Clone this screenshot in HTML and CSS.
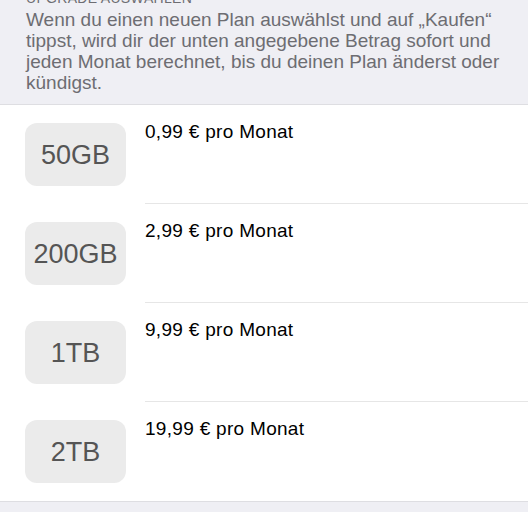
FILE: index.html
```html
<!DOCTYPE html>
<html lang="de">
<head>
    <meta charset="UTF-8">
    <meta name="viewport" content="width=device-width, initial-scale=1.0">
    <title>Upgrade auswählen</title>
    <link rel="stylesheet" href="styles.css">
</head>
<body>
    <div class="section-header">
        <h3>Upgrade auswählen</h3>
        <p>Wenn du einen neuen Plan auswählst und auf „Kaufen“ tippst, wird dir der unten angegebene Betrag sofort und jeden Monat berechnet, bis du deinen Plan änderst oder kündigst.</p>
    </div>

    <ul class="plan-list">
        <li class="plan">
            <div class="plan-badge">50GB</div>
            <div class="plan-info">0,99 € pro Monat</div>
        </li>
        <li class="plan">
            <div class="plan-badge">200GB</div>
            <div class="plan-info">2,99 € pro Monat</div>
        </li>
        <li class="plan">
            <div class="plan-badge">1TB</div>
            <div class="plan-info">9,99 € pro Monat</div>
        </li>
        <li class="plan">
            <div class="plan-badge">2TB</div>
            <div class="plan-info">19,99 € pro Monat</div>
        </li>
    </ul>
</body>
</html>
```

FILE: styles.css
```css
* {
    margin: 0;
    padding: 0;
    box-sizing: border-box;
}
body {
    background: #efeff4;
    font-family: 'Liberation Sans', Arial, sans-serif;
    overflow: hidden;
}
.section-header {
    padding: 0 20px 11px 26px;
    color: #6d6d72;
}
.section-header h3 {
    margin-top: -10px;
    font-size: 14px;
    font-weight: normal;
    line-height: 17px;
    text-transform: uppercase;
    letter-spacing: 0.3px;
}
.section-header p {
    margin-top: 2px;
    font-size: 19px;
    line-height: 21px;
}
.plan-list {
    list-style: none;
    background: #fff;
    border-top: 1px solid #dedee2;
    border-bottom: 1px solid #dedee2;
}
.plan {
    display: flex;
    gap: 19px;
    padding-left: 25px;
}
.plan-badge {
    flex: none;
    display: flex;
    align-items: center;
    justify-content: center;
    width: 101px;
    height: 63px;
    margin: 18px 0;
    padding-top: 2px;
    border-radius: 12px;
    background: #ebebeb;
    color: #555;
    font-size: 27px;
}
.plan-info {
    flex: 1;
    padding-top: 16px;
    font-size: 19px;
    letter-spacing: 0.3px;
    color: #000;
    border-bottom: 1px solid #e6e6e6;
}
.plan:last-child .plan-info {
    border-bottom: none;
}
```
